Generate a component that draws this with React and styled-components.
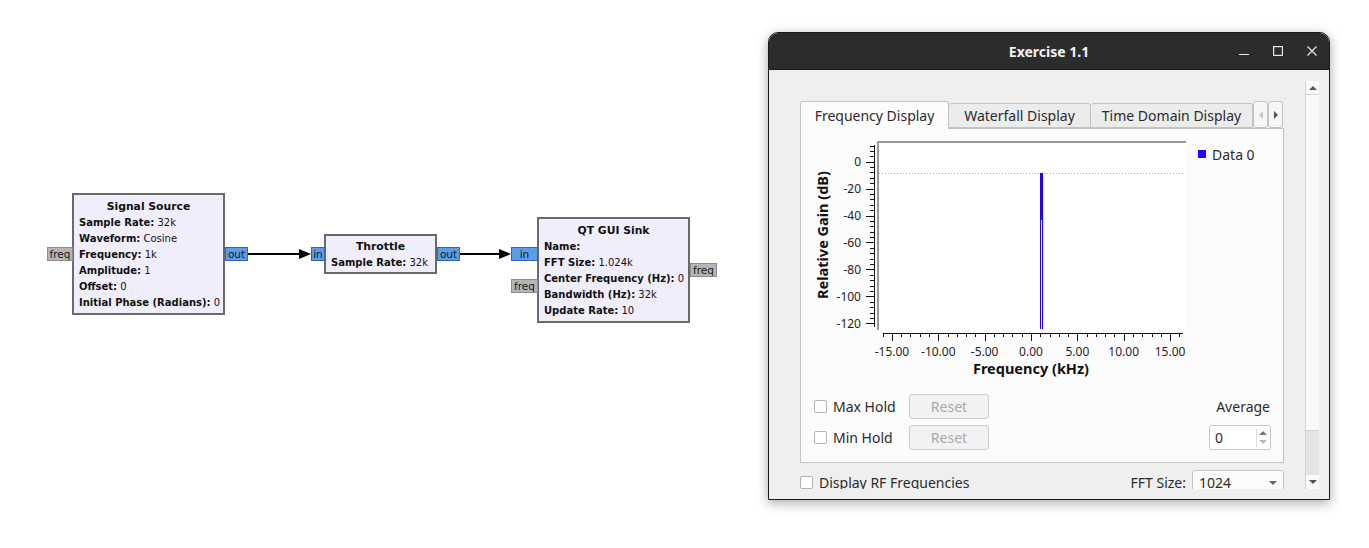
import React from "react";
import styled, { createGlobalStyle } from "styled-components";

const GlobalStyle = createGlobalStyle`
  html, body { margin: 0; padding: 0; background: #ffffff; }
  * { box-sizing: border-box; }
`;

const UI_FONT = `"Noto Sans", "Open Sans", "DejaVu Sans", sans-serif`;
const GRC_FONT = `"DejaVu Sans", "Noto Sans", sans-serif`;

const Page = styled.div`
  display: flex;
  width: 1369px;
  height: 548px;
  background: #ffffff;
  overflow: hidden;
`;

/* ---------- Flowgraph canvas ---------- */
const Canvas = styled.div`
  position: relative;
  flex: none;
  width: 768px;
  height: 548px;
  font-family: ${GRC_FONT};
  font-size: 10px;
  color: #111;
`;

const Block = styled.div`
  position: absolute;
  left: ${(p) => p.$x}px;
  top: ${(p) => p.$y}px;
  width: ${(p) => p.$w}px;
  border: 2px solid #6a6a6a;
  background: #f1eefc;
  padding: ${(p) => (p.$tight ? "3px 5px 1px 5px" : "4px 5px 2px 5px")};
  line-height: 16px;
  white-space: nowrap;
`;

const BlockTitle = styled.div`
  font-weight: bold;
  font-size: 10.8px;
  text-align: center;
`;

const Param = styled.div`
  & > b { font-weight: bold; }
`;

const Port = styled.div`
  position: absolute;
  left: ${(p) => p.$x}px;
  top: ${(p) => p.$y}px;
  width: ${(p) => p.$w}px;
  height: 14px;
  line-height: 12px;
  text-align: center;
  overflow: hidden;
  border: 1px solid ${(p) => (p.$kind === "msg" ? "#8c8c8c" : "#2f66b8")};
  background: ${(p) => (p.$kind === "msg" ? "#b5b5b5" : "#5d9ce6")};
  color: #1a1a1a;
  font-size: 10.5px;
`;

const Wires = styled.svg`
  position: absolute;
  left: 0;
  top: 0;
  pointer-events: none;
`;

/* ---------- Window ---------- */
const Desktop = styled.div`
  flex: none;
  padding-top: 32px;
`;

const Window = styled.div`
  width: 562px;
  height: 468px;
  border: 1px solid #1b1b1b;
  border-radius: 10px 10px 0 0;
  overflow: hidden;
  display: flex;
  flex-direction: column;
  box-shadow: 0 3px 12px rgba(0, 0, 0, 0.35);
  font-family: ${UI_FONT};
  color: #2b2b2b;
`;

const TitleBar = styled.div`
  flex: none;
  height: 37px;
  background: #2c2c2c;
  display: grid;
  grid-template-columns: 1fr auto 1fr;
  align-items: center;
  border-bottom: 1px solid #1b1b1b;
`;

const Title = styled.div`
  grid-column: 2;
  color: #f2f2f2;
  font-weight: bold;
  font-size: 14px;
  padding-top: 1px;
`;

const Controls = styled.div`
  grid-column: 3;
  justify-self: end;
  display: flex;
  height: 100%;
`;

const CtrlBtn = styled.div`
  width: 34px;
  height: 100%;
  display: flex;
  align-items: center;
  justify-content: center;
  color: #e8e8e8;
`;

const Content = styled.div`
  flex: 1;
  min-height: 0;
  background: #efefef;
  display: flex;
  padding: 11px 10px 10px 0;
`;

const Viewport = styled.div`
  flex: 1;
  min-width: 0;
  overflow: hidden;
  padding: 20px 21px 0 31px;
`;

const ScrollBar = styled.div`
  flex: none;
  width: 14px;
  display: flex;
  flex-direction: column;
  background: #fafafa;
  border-left: 1px solid #d4d4d4;
`;

const ScrollArrow = styled.div`
  flex: none;
  height: 14px;
  display: flex;
  align-items: center;
  justify-content: center;
  border-bottom: ${(p) => (p.$up ? "1px solid #d8d8d8" : "none")};
`;

const ScrollTrack = styled.div`
  flex: 1;
  display: flex;
  flex-direction: column;
  justify-content: flex-end;
`;

const ScrollHandle = styled.div`
  height: 45px;
  background: #e4e4e4;
  border-top: 1px solid #d6d6d6;
`;

const TabBar = styled.div`
  display: flex;
  align-items: flex-end;
  height: 27px;
`;

const Tab = styled.div`
  flex: none;
  width: ${(p) => p.$w}px;
  height: ${(p) => (p.$active ? 28 : 25)}px;
  margin-bottom: ${(p) => (p.$active ? -1 : 0)}px;
  display: flex;
  align-items: center;
  justify-content: center;
  font-size: 14px;
  color: #2b2b2b;
  background: ${(p) => (p.$active ? "#fcfcfc" : "#ececec")};
  border: 1px solid #c3c3c3;
  border-bottom: ${(p) => (p.$active ? "none" : "1px solid #c3c3c3")};
  border-left: ${(p) => (p.$first ? "1px solid #c3c3c3" : "none")};
  border-radius: 3px 3px 0 0;
  position: relative;
  z-index: ${(p) => (p.$active ? 1 : 0)};
  padding-bottom: ${(p) => (p.$active ? 1 : 0)}px;
`;

const TabScroll = styled.div`
  flex: none;
  width: 15px;
  height: 27px;
  display: flex;
  align-items: center;
  justify-content: center;
  background: #f6f6f6;
  border: 1px solid #c3c3c3;
  border-radius: 3px;
`;

const Pane = styled.div`
  height: 335px;
  background: #fcfcfc;
  border: 1px solid #c3c3c3;
  display: flex;
  flex-direction: column;
`;

const PlotSvg = styled.svg`
  display: block;
  flex: none;
  font-family: ${UI_FONT};
`;

const HoldGrid = styled.div`
  margin-top: 10px;
  padding: 0 12px 0 13px;
  display: grid;
  grid-template-columns: 95px 80px 1fr auto;
  grid-template-rows: 25px 25px;
  row-gap: 6px;
  align-items: center;
`;

const CheckRow = styled.label`
  display: flex;
  align-items: center;
  gap: 6px;
  font-size: 14px;
  color: #2b2b2b;
  white-space: nowrap;
`;

const Box = styled.span`
  flex: none;
  width: 13px;
  height: 13px;
  background: #ffffff;
  border: 1px solid #b3b3b3;
  border-radius: 2px;
`;

const ResetButton = styled.div`
  height: 25px;
  width: 80px;
  border: 1px solid #cdcdcd;
  border-radius: 3px;
  background: #f2f2f2;
  color: #a9a9a9;
  font-size: 14px;
  display: flex;
  align-items: center;
  justify-content: center;
`;

const AvgLabel = styled.div`
  grid-column: 4;
  justify-self: end;
  margin-right: 1px;
  font-size: 14px;
  color: #2b2b2b;
`;

const SpinBox = styled.div`
  grid-column: 4;
  justify-self: end;
  width: 62px;
  height: 25px;
  background: #ffffff;
  border: 1px solid #c6c6c6;
  border-radius: 3px;
  display: flex;
  align-items: center;
  justify-content: space-between;
  padding: 0 3px 0 5px;
  font-size: 14px;
  color: #2b2b2b;
`;

const SpinArrows = styled.div`
  height: 19px;
  width: 11px;
  border-left: 1px solid #dcdcdc;
  display: flex;
  flex-direction: column;
  align-items: flex-end;
  justify-content: space-around;
`;

const BottomRow = styled.div`
  margin-top: 7px;
  display: flex;
  align-items: center;
  height: 25px;
`;

const FftLabel = styled.div`
  margin-left: auto;
  margin-right: 6px;
  font-size: 14px;
  color: #2b2b2b;
`;

const Combo = styled.div`
  width: 92px;
  height: 25px;
  background: #fbfbfb;
  border: 1px solid #c6c6c6;
  border-radius: 3px;
  display: flex;
  align-items: center;
  justify-content: space-between;
  padding: 0 6px 0 6px;
  font-size: 14px;
  color: #2b2b2b;
`;

const Tri = ({ dir = "down", color = "#666", size = 4 }) => {
  const s = size;
  const pts =
    dir === "down"
      ? `0,0 ${2 * s},0 ${s},${s}`
      : dir === "up"
      ? `0,${s} ${2 * s},${s} ${s},0`
      : dir === "right"
      ? `0,0 ${s},${s} 0,${2 * s}`
      : `${s},0 0,${s} ${s},${2 * s}`;
  const w = dir === "down" || dir === "up" ? 2 * s : s;
  const h = dir === "down" || dir === "up" ? s : 2 * s;
  return (
    <svg width={w} height={h} style={{ display: "block" }}>
      <polygon points={pts} fill={color} />
    </svg>
  );
};

/* ---------- Plot ---------- */
const yOf = (db) => 32.7 - db * 1.3465;
const xOf = (k) => 230 + 9.27 * k;

function Plot() {
  const yMajor = [0, -20, -40, -60, -80, -100, -120];
  const yMinor = [];
  for (let d = 12; d >= -120; d -= 4) yMinor.push(d);
  const xMajor = [-15, -10, -5, 0, 5, 10, 15];
  const xMinor = [];
  for (let k = -16; k <= 16; k += 1) xMinor.push(k);
  return (
    <PlotSvg width="481" height="255" viewBox="0 0 481 255">
      <rect x="76" y="12" width="309" height="189" fill="#ffffff" />
      <path d="M77 201 V13 H385" fill="none" stroke="#9a9a9a" strokeWidth="2" />
      <line x1="78" y1="44.5" x2="382" y2="44.5" stroke="#79d94a" strokeWidth="1" strokeDasharray="1 2" />
      {/* signal */}
      <rect x="239" y="44" width="3" height="47" fill="#2000ff" />
      <line x1="239.5" y1="44" x2="239.5" y2="200" stroke="#2000ff" strokeWidth="1" />
      <line x1="241.5" y1="91" x2="241.5" y2="200" stroke="#2000ff" strokeWidth="1" />
      {/* y axis */}
      <line x1="73.5" y1="16" x2="73.5" y2="198" stroke="#111" strokeWidth="1" />
      {yMinor.map((d) => (
        <line key={"ym" + d} x1="69" y1={Math.round(yOf(d)) + 0.5} x2="74" y2={Math.round(yOf(d)) + 0.5} stroke="#111" />
      ))}
      {yMajor.map((d) => (
        <g key={"yM" + d}>
          <line x1="65" y1={Math.round(yOf(d)) + 0.5} x2="74" y2={Math.round(yOf(d)) + 0.5} stroke="#111" />
          <text x="60" y={yOf(d)} textAnchor="end" dominantBaseline="central" fontSize="12" fill="#1e1e1e">
            {d}
          </text>
        </g>
      ))}
      {/* x axis */}
      <line x1="82" y1="204.5" x2="382" y2="204.5" stroke="#111" strokeWidth="1" />
      {xMinor.map((k) => (
        <line key={"xm" + k} x1={Math.round(xOf(k)) + 0.5} y1="204" x2={Math.round(xOf(k)) + 0.5} y2="208" stroke="#111" />
      ))}
      {xMajor.map((k) => (
        <g key={"xM" + k}>
          <line x1={Math.round(xOf(k)) + 0.5} y1="204" x2={Math.round(xOf(k)) + 0.5} y2="212" stroke="#111" />
          <text x={xOf(k)} y="222" textAnchor="middle" dominantBaseline="central" fontSize="12" fill="#1e1e1e">
            {k.toFixed(2)}
          </text>
        </g>
      ))}
      <text x="230" y="239" textAnchor="middle" dominantBaseline="central" fontSize="14.5" fontWeight="bold" fill="#111">
        Frequency (kHz)
      </text>
      <text
        x="0"
        y="0"
        transform="translate(21 106) rotate(-90)"
        textAnchor="middle"
        dominantBaseline="central"
        fontSize="14.5"
        fontWeight="bold"
        fill="#111"
      >
        Relative Gain (dB)
      </text>
      {/* legend */}
      <rect x="397" y="21" width="8" height="8" fill="#2000ff" />
      <text x="411" y="25" dominantBaseline="central" fontSize="14" fill="#2b2b2b">
        Data 0
      </text>
    </PlotSvg>
  );
}

function Arrow({ x1, x2, y }) {
  return (
    <g>
      <line x1={x1} y1={y} x2={x2 - 8} y2={y} stroke="#000" strokeWidth="2" />
      <polygon points={`${x2 - 12},${y - 5} ${x2},${y} ${x2 - 12},${y + 5}`} fill="#000" />
    </g>
  );
}

export default function App() {
  return (
    <Page>
      <GlobalStyle />
      <Canvas>
        <Wires width="768" height="548">
          <Arrow x1={247} x2={311} y={254} />
          <Arrow x1={459} x2={511} y={254} />
        </Wires>

        <Block $x={72} $y={193} $w={153}>
          <BlockTitle>Signal Source</BlockTitle>
          <Param><b>Sample Rate:</b> 32k</Param>
          <Param><b>Waveform:</b> Cosine</Param>
          <Param><b>Frequency:</b> 1k</Param>
          <Param><b>Amplitude:</b> 1</Param>
          <Param><b>Offset:</b> 0</Param>
          <Param><b>Initial Phase (Radians):</b> 0</Param>
        </Block>
        <Port $kind="msg" $x={47} $y={247} $w={26}>freq</Port>
        <Port $kind="stream" $x={225} $y={247} $w={23}>out</Port>

        <Block $x={324} $y={234} $w={113} $tight>
          <BlockTitle>Throttle</BlockTitle>
          <Param><b>Sample Rate:</b> 32k</Param>
        </Block>
        <Port $kind="stream" $x={311} $y={247} $w={14}>in</Port>
        <Port $kind="stream" $x={437} $y={247} $w={23}>out</Port>

        <Block $x={537} $y={217} $w={153}>
          <BlockTitle>QT GUI Sink</BlockTitle>
          <Param><b>Name:</b></Param>
          <Param><b>FFT Size:</b> 1.024k</Param>
          <Param><b>Center Frequency (Hz):</b> 0</Param>
          <Param><b>Bandwidth (Hz):</b> 32k</Param>
          <Param><b>Update Rate:</b> 10</Param>
        </Block>
        <Port $kind="stream" $x={511} $y={247} $w={27}>in</Port>
        <Port $kind="msg" $x={511} $y={279} $w={27}>freq</Port>
        <Port $kind="msg" $x={690} $y={263} $w={27}>freq</Port>
      </Canvas>

      <Desktop>
        <Window>
          <TitleBar>
            <Title>Exercise 1.1</Title>
            <Controls>
              <CtrlBtn>
                <svg width="10" height="10" viewBox="0 0 10 10">
                  <line x1="0" y1="8.5" x2="10" y2="8.5" stroke="currentColor" strokeWidth="1.2" />
                </svg>
              </CtrlBtn>
              <CtrlBtn>
                <svg width="10" height="10" viewBox="0 0 10 10">
                  <rect x="0.6" y="0.6" width="8.8" height="8.8" fill="none" stroke="currentColor" strokeWidth="1.2" />
                </svg>
              </CtrlBtn>
              <CtrlBtn>
                <svg width="10" height="10" viewBox="0 0 10 10">
                  <path d="M0.5 0.5 L9.5 9.5 M9.5 0.5 L0.5 9.5" stroke="currentColor" strokeWidth="1.2" />
                </svg>
              </CtrlBtn>
            </Controls>
          </TitleBar>

          <Content>
            <Viewport>
              <TabBar>
                <Tab $w={149} $active $first>Frequency Display</Tab>
                <Tab $w={142}>Waterfall Display</Tab>
                <Tab $w={162}>Time Domain Display</Tab>
                <TabScroll><Tri dir="left" color="#c8c8c8" size={4} /></TabScroll>
                <TabScroll><Tri dir="right" color="#555" size={4} /></TabScroll>
              </TabBar>
              <Pane>
                <Plot />
                <HoldGrid>
                  <CheckRow><Box />Max Hold</CheckRow>
                  <ResetButton>Reset</ResetButton>
                  <AvgLabel>Average</AvgLabel>
                  <CheckRow><Box />Min Hold</CheckRow>
                  <ResetButton>Reset</ResetButton>
                  <SpinBox>
                    0
                    <SpinArrows>
                      <Tri dir="up" color="#777" size={4} />
                      <Tri dir="down" color="#bbb" size={4} />
                    </SpinArrows>
                  </SpinBox>
                </HoldGrid>
              </Pane>
              <BottomRow>
                <CheckRow><Box />Display RF Frequencies</CheckRow>
                <FftLabel>FFT Size:</FftLabel>
                <Combo>
                  1024
                  <Tri dir="down" color="#666" size={4} />
                </Combo>
              </BottomRow>
            </Viewport>
            <ScrollBar>
              <ScrollArrow $up><Tri dir="up" color="#555" size={4} /></ScrollArrow>
              <ScrollTrack>
                <ScrollHandle />
              </ScrollTrack>
              <ScrollArrow><Tri dir="down" color="#555" size={4} /></ScrollArrow>
            </ScrollBar>
          </Content>
        </Window>
      </Desktop>
    </Page>
  );
}
